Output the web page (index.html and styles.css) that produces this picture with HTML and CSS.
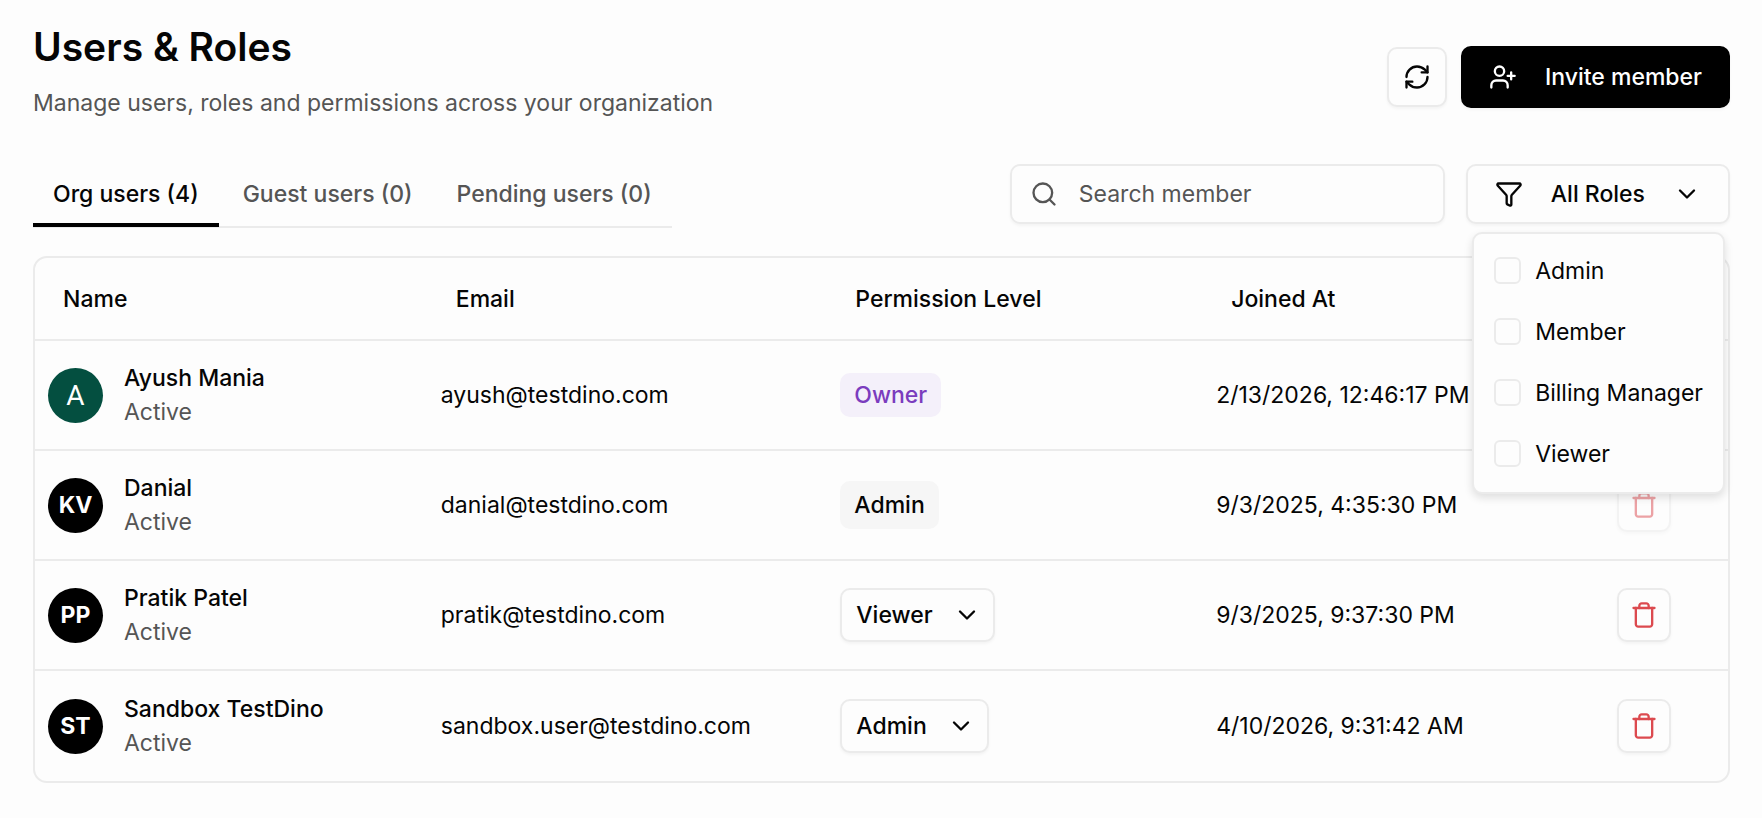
FILE: index.html
```html
<!DOCTYPE html>
<html lang="en">
<head>
<meta charset="utf-8">
<meta name="viewport" content="width=device-width, initial-scale=1">
<title>Users &amp; Roles</title>
<link rel="stylesheet" href="styles.css">
</head>
<body>
<svg class="sprite" aria-hidden="true">
  <symbol id="i-refresh" viewBox="0 0 24 24"><path d="M3 12a9 9 0 0 1 9-9 9.75 9.75 0 0 1 6.74 2.74L21 8"/><path d="M21 3v5h-5"/><path d="M21 12a9 9 0 0 1-9 9 9.75 9.75 0 0 1-6.74-2.74L3 16"/><path d="M8 16H3v5"/></symbol>
  <symbol id="i-user-plus" viewBox="0 0 24 24"><path d="M16 21v-2a4 4 0 0 0-4-4H6a4 4 0 0 0-4 4v2"/><circle cx="9" cy="7" r="4"/><path d="M19 8v6M22 11h-6"/></symbol>
  <symbol id="i-search" viewBox="0 0 24 24"><circle cx="11" cy="11" r="8"/><path d="m21 21-4.3-4.3"/></symbol>
  <symbol id="i-filter" viewBox="0 0 24 24"><path d="M10 20a1 1 0 0 0 .553.895l2 1A1 1 0 0 0 14 21v-7a2 2 0 0 1 .517-1.341L21.74 4.67A1 1 0 0 0 21 3H3a1 1 0 0 0-.742 1.67l7.225 7.989A2 2 0 0 1 10 14z"/></symbol>
  <symbol id="i-chevron" viewBox="0 0 24 24"><path d="m6 9 6 6 6-6"/></symbol>
  <symbol id="i-trash" viewBox="0 0 24 24"><path d="M3 6h18"/><path d="M19 6v14c0 1-1 2-2 2H7c-1 0-2-1-2-2V6"/><path d="M8 6V4c0-1 1-2 2-2h4c1 0 2 1 2 2v2"/></symbol>
</svg>

<main class="page">
  <header class="page-header">
    <div>
      <h1 class="title">Users &amp; Roles</h1>
      <p class="subtitle">Manage users, roles and permissions across your organization</p>
    </div>
    <div class="actions">
      <button class="btn refresh" type="button" aria-label="Refresh"><svg class="icon"><use href="#i-refresh"/></svg></button>
      <button class="btn invite" type="button"><svg class="icon"><use href="#i-user-plus"/></svg>Invite member</button>
    </div>
  </header>

  <div class="toolbar">
    <div class="tabs" role="tablist">
      <button class="tab active" type="button" role="tab" aria-selected="true">Org users (4)</button>
      <button class="tab" type="button" role="tab" aria-selected="false">Guest users (0)</button>
      <button class="tab" type="button" role="tab" aria-selected="false">Pending users (0)</button>
    </div>
    <div class="filters">
      <label class="search">
        <svg class="icon"><use href="#i-search"/></svg>
        <input type="text" placeholder="Search member" aria-label="Search member">
      </label>
      <div class="role-filter">
        <button class="btn role-button" type="button" aria-expanded="true" aria-controls="roles"><svg class="icon"><use href="#i-filter"/></svg>All Roles<svg class="icon"><use href="#i-chevron"/></svg></button>
        <div class="menu" id="roles">
          <label class="option"><input type="checkbox">Admin</label>
          <label class="option"><input type="checkbox">Member</label>
          <label class="option"><input type="checkbox">Billing Manager</label>
          <label class="option"><input type="checkbox">Viewer</label>
        </div>
      </div>
    </div>
  </div>

  <div class="table-card">
    <table class="members">
      <colgroup><col class="c-name"><col class="c-email"><col class="c-level"><col class="c-joined"><col></colgroup>
      <thead>
        <tr><th>Name</th><th>Email</th><th>Permission Level</th><th>Joined At</th><td></td></tr>
      </thead>
      <tbody>
        <tr>
          <td><div class="person"><span class="avatar green">A</span><div><div class="name">Ayush Mania</div><div class="status">Active</div></div></div></td>
          <td>ayush@testdino.com</td>
          <td><span class="badge owner">Owner</span></td>
          <td>2/13/2026, 12:46:17 PM</td>
          <td></td>
        </tr>
        <tr>
          <td><div class="person"><span class="avatar">KV</span><div><div class="name">Danial</div><div class="status">Active</div></div></div></td>
          <td>danial@testdino.com</td>
          <td><span class="badge">Admin</span></td>
          <td>9/3/2025, 4:35:30 PM</td>
          <td><button class="btn delete" type="button" aria-label="Remove Danial" disabled><svg class="icon"><use href="#i-trash"/></svg></button></td>
        </tr>
        <tr>
          <td><div class="person"><span class="avatar">PP</span><div><div class="name">Pratik Patel</div><div class="status">Active</div></div></div></td>
          <td>pratik@testdino.com</td>
          <td><div class="select"><select aria-label="Permission level of Pratik Patel"><option>Viewer</option></select><svg class="icon"><use href="#i-chevron"/></svg></div></td>
          <td>9/3/2025, 9:37:30 PM</td>
          <td><button class="btn delete" type="button" aria-label="Remove Pratik Patel"><svg class="icon"><use href="#i-trash"/></svg></button></td>
        </tr>
        <tr>
          <td><div class="person"><span class="avatar">ST</span><div><div class="name">Sandbox TestDino</div><div class="status">Active</div></div></div></td>
          <td>sandbox.user@testdino.com</td>
          <td><div class="select"><select aria-label="Permission level of Sandbox TestDino"><option>Admin</option></select><svg class="icon"><use href="#i-chevron"/></svg></div></td>
          <td>4/10/2026, 9:31:42 AM</td>
          <td><button class="btn delete" type="button" aria-label="Remove Sandbox TestDino"><svg class="icon"><use href="#i-trash"/></svg></button></td>
        </tr>
      </tbody>
    </table>
  </div>
</main>
</body>
</html>
```

FILE: styles.css
```css
:root {
  --bg: #fdfdfd;
  --text: #050505;
  --muted: #555;
  --border: #ebebeb;
  --shadow: 0 2px 3px rgba(0, 0, 0, 0.04);
}

* { box-sizing: border-box; }

body {
  margin: 0;
  background: var(--bg);
  color: var(--text);
  font-family: Inter, "Liberation Sans", sans-serif;
  font-size: 23px;
  line-height: 34px;
}

button, input, select { font: inherit; color: inherit; }

.sprite { position: absolute; width: 0; height: 0; }

.icon {
  flex: none;
  width: 28px;
  height: 28px;
  fill: none;
  stroke: currentColor;
  stroke-width: 2;
  stroke-linecap: round;
  stroke-linejoin: round;
}

.page { padding: 23px 32px 36px 33px; }

.page-header { display: flex; justify-content: space-between; align-items: flex-end; }
.title { margin: 0; font-size: 39px; line-height: 48px; font-weight: 600; }
.subtitle { margin: 15px 0 0; color: var(--muted); }

.actions { display: flex; align-items: center; gap: 14px; padding-bottom: 12px; }

.btn {
  display: flex;
  align-items: center;
  justify-content: center;
  padding: 0;
  background: var(--bg);
  border: 2px solid var(--border);
  border-radius: 10px;
  box-shadow: var(--shadow);
  font-weight: 500;
}
.refresh { width: 60px; height: 60px; }
.invite {
  height: 62px;
  gap: 28px;
  padding: 0 26px;
  background: #000;
  border-color: #000;
  color: #fff;
}

.toolbar { display: flex; justify-content: space-between; margin-top: 44px; }

.tabs { display: flex; gap: 4px; height: 64px; border-bottom: 2px solid var(--border); }
.tab {
  padding: 0 20px;
  height: 63px;
  background: none;
  border: 0;
  border-bottom: 4px solid transparent;
  color: var(--muted);
  font-weight: 500;
}
.tab.active { color: var(--text); border-bottom-color: #000; }

.filters { display: flex; gap: 21px; }
.search {
  display: flex;
  align-items: center;
  gap: 21px;
  width: 435px;
  height: 60px;
  padding: 0 18px;
  border: 2px solid var(--border);
  border-radius: 10px;
  box-shadow: var(--shadow);
  color: var(--muted);
}
.search input { flex: 1; min-width: 0; padding: 0; border: 0; outline: 0; background: none; }
.search input::placeholder { color: var(--muted); opacity: 1; }

.role-filter { position: relative; }
.role-button { height: 60px; gap: 28px; padding: 0 27px; }
.menu {
  position: absolute;
  z-index: 1;
  top: 68px;
  right: 5px;
  padding: 6px 20px 8px;
  background: var(--bg);
  border: 2px solid var(--border);
  border-radius: 10px;
  box-shadow: 0 4px 8px rgba(0, 0, 0, 0.12);
  white-space: nowrap;
}
.option { display: flex; align-items: center; gap: 14px; height: 61px; }
.option input {
  appearance: none;
  width: 27px;
  height: 27px;
  margin: 0;
  border: 2px solid var(--border);
  border-radius: 6px;
}

.table-card { margin-top: 28px; border: 2px solid var(--border); border-radius: 14px; }
.members { width: 100%; table-layout: fixed; border-spacing: 0; }
.c-name { width: 23.2%; }
.c-email { width: 23.6%; }
.c-level { width: 22.2%; }
.c-joined { width: 23.7%; }
.members th {
  height: 83px;
  padding: 0 28px;
  border-bottom: 2px solid var(--border);
  text-align: left;
  font-weight: 500;
}
.members td { padding: 0 13px; border-bottom: 2px solid var(--border); white-space: nowrap; }
.members tbody td { height: 110px; }
.members tbody tr:last-child td { border-bottom: 0; }

.person { display: flex; align-items: center; gap: 21px; }
.avatar {
  display: flex;
  align-items: center;
  justify-content: center;
  width: 55px;
  height: 55px;
  border-radius: 50%;
  background: #000;
  color: #fff;
  font-weight: 700;
}
.avatar.green { background: #044f40; font: 400 28px Roboto, sans-serif; }
.name { font-weight: 500; }
.status { color: var(--muted); }

.badge {
  display: inline-block;
  padding: 7px 14px;
  border-radius: 10px;
  background: #f6f6f6;
  font-weight: 500;
}
.badge.owner { padding: 5px 14px; background: #f4f0fa; color: #7b3cbe; }

.select { position: relative; display: inline-block; vertical-align: middle; }
.select select {
  appearance: none;
  height: 54px;
  padding: 0 60px 0 14px;
  background: var(--bg);
  border: 2px solid var(--border);
  border-radius: 10px;
  box-shadow: var(--shadow);
  font-weight: 500;
}
.select .icon { position: absolute; top: 13px; right: 14px; pointer-events: none; }

.delete { width: 54px; height: 54px; color: #dc4a4f; }
.delete:disabled { opacity: 0.5; }
```
